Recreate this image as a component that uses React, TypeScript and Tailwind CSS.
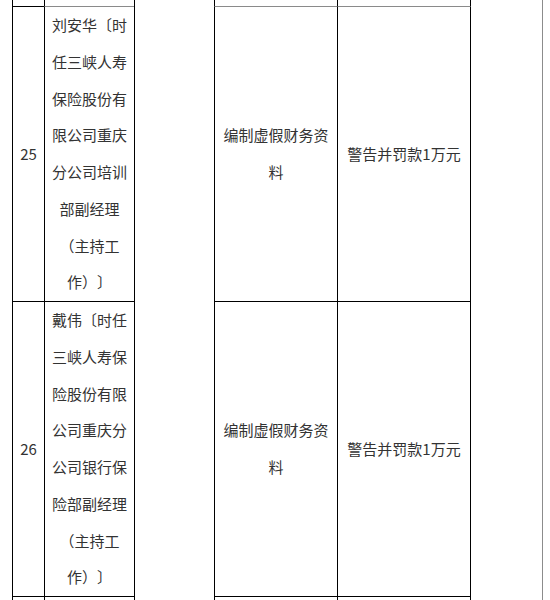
import React from "react";

const rows = [
  {
    no: "25",
    name: ["刘安华〔时", "任三峡人寿", "保险股份有", "限公司重庆", "分公司培训", "部副经理", "（主持工", "作）〕"],
    reason: ["编制虚假财务资", "料"],
    penalty: "警告并罚款1万元",
    top: "border-[#8a8a8a]",
  },
  {
    no: "26",
    name: ["戴伟〔时任", "三峡人寿保", "险股份有限", "公司重庆分", "公司银行保", "险部副经理", "（主持工", "作）〕"],
    reason: ["编制虚假财务资", "料"],
    penalty: "警告并罚款1万元",
    top: "border-black",
  },
];

export default function App() {
  return (
    <div
      className="w-[543px] h-[600px] overflow-hidden bg-white border-r border-[#8c8c8c] pl-[12px] text-[#333] text-[15px] [text-spacing-trim:space-all]"
      style={{ fontFamily: '"Noto Sans CJK SC", "Noto Sans", sans-serif' }}
    >
      <div className="grid grid-cols-[32px_90px_80px_123px_134px] grid-rows-[6px_295px_295px_4px] w-[459px]">
        {/* row 0: tail of the previous row */}
        <div className="col-start-1 row-start-1 border-l border-black" />
        <div className="col-start-2 row-start-1 border-l border-black" />
        <div className="col-start-4 row-start-1 border-l border-black" />
        <div className="col-start-5 row-start-1 border-l border-r border-black" />

        {/* merged empty column */}
        <div className="col-start-3 row-start-1 row-span-4 border-l border-black" />

        {rows.map((r, i) => {
          const rs = i === 0 ? "row-start-2" : "row-start-3";
          return (
            <React.Fragment key={r.no}>
              <div className={`col-start-1 ${rs} border-l border-black border-t ${r.top} flex items-center justify-center leading-[36.75px]`}>
                {r.no}
              </div>
              <div className={`col-start-2 ${rs} border-l border-l-black border-t ${r.top} flex flex-col items-center justify-center text-center leading-[36.75px] whitespace-nowrap`}>
                {r.name.map((l) => (
                  <div key={l}>{l}</div>
                ))}
              </div>
              <div className={`col-start-4 ${rs} border-l border-l-black border-t ${r.top} flex flex-col items-center justify-center text-center leading-[36.75px] whitespace-nowrap`}>
                {r.reason.map((l) => (
                  <div key={l}>{l}</div>
                ))}
              </div>
              <div className={`col-start-5 ${rs} border-l border-r border-l-black border-r-black border-t ${r.top} flex items-center justify-center text-center leading-[36.75px] whitespace-nowrap`}>
                {r.penalty}
              </div>
            </React.Fragment>
          );
        })}

        {/* row 3: start of the next row */}
        <div className="col-start-1 row-start-4 border-l border-t border-black" />
        <div className="col-start-2 row-start-4 border-l border-t border-black" />
        <div className="col-start-4 row-start-4 border-l border-t border-black" />
        <div className="col-start-5 row-start-4 border-l border-r border-t border-black" />
      </div>
    </div>
  );
}
